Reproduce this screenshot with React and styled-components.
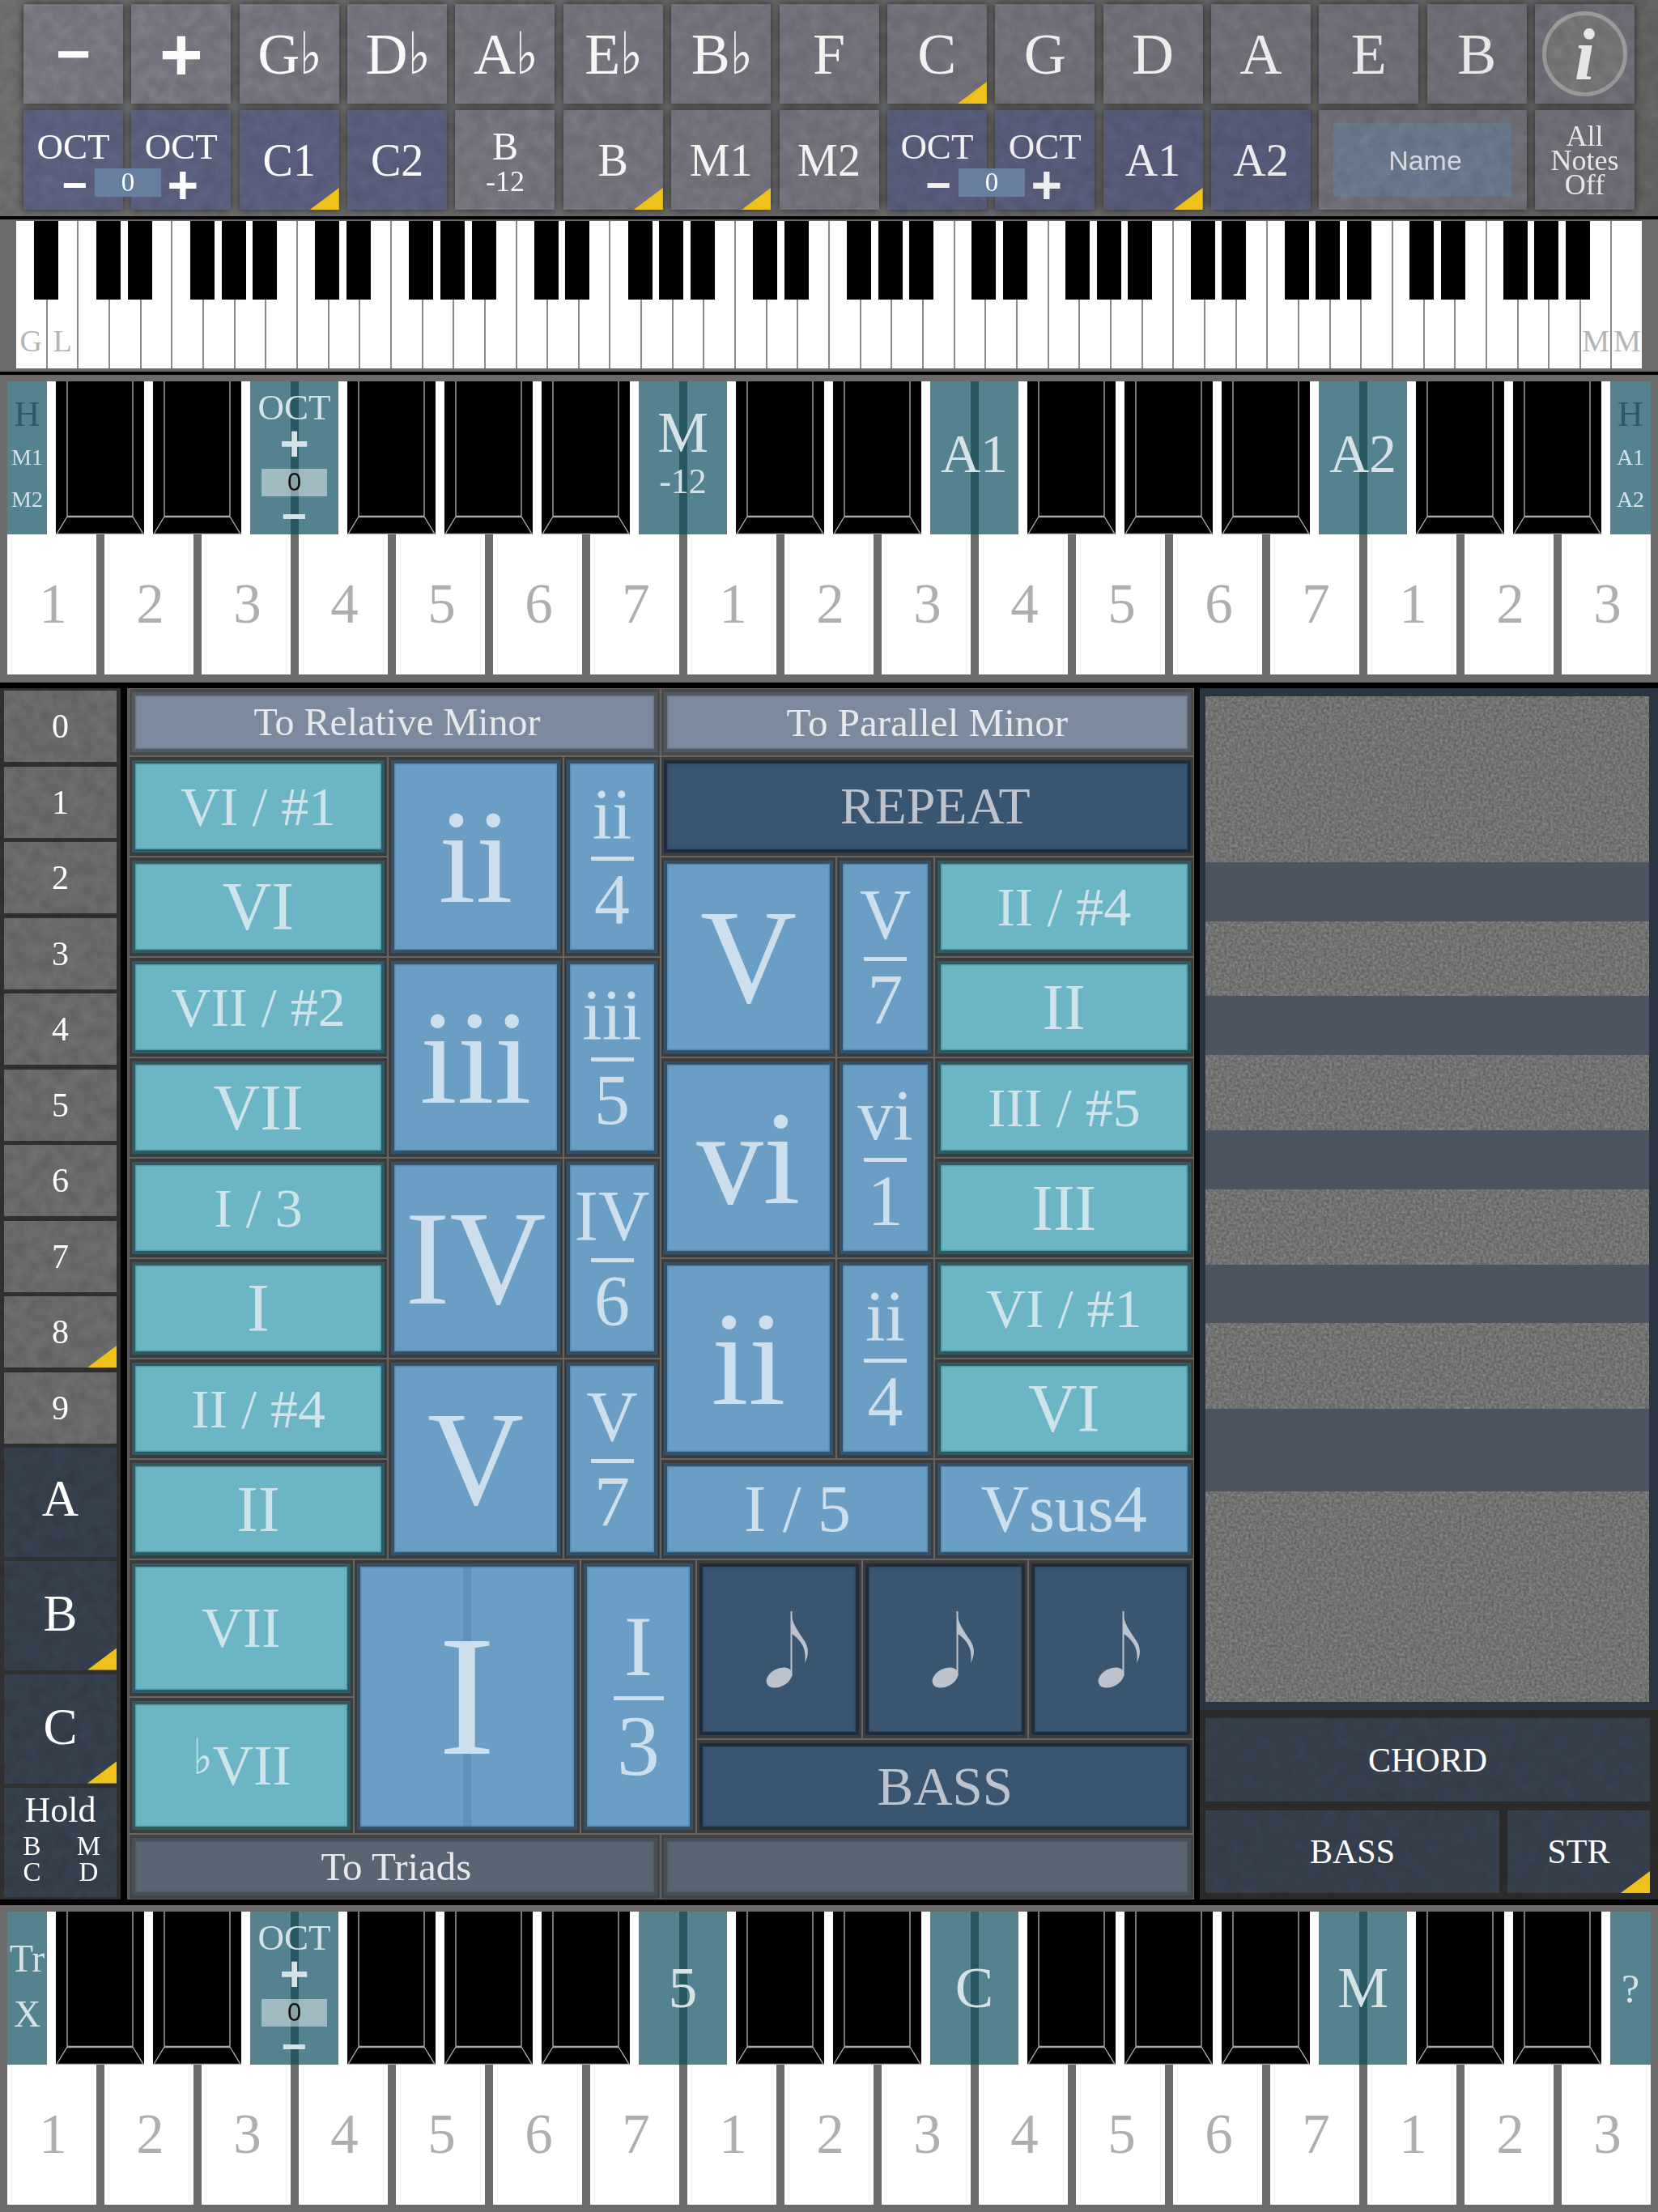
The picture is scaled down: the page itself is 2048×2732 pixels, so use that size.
import React from "react";
import styled, { createGlobalStyle } from "styled-components";

const SERIF = `"Liberation Serif", "Times New Roman", serif`;
const SANS = `"Liberation Sans", Arial, sans-serif`;

const GlobalStyle = createGlobalStyle`
  html, body {
    margin: 0;
    background: #000;
  }
  * {
    box-sizing: border-box;
  }
`;

const Page = styled.div`
  width: 2048px;
  height: 2732px;
  overflow: hidden;
  display: flex;
  flex-direction: column;
  font-family: ${SERIF};
  color: #fff;
`;

const GrainDefs = styled.svg`
  position: absolute;
  width: 0;
  height: 0;
`;

const Grain = styled.div`
  position: absolute;
  inset: 0;
  pointer-events: none;
  filter: url(#${(p) => p.$kind || "mottled"});
  opacity: ${(p) => p.$opacity || 0.25};
  mix-blend-mode: overlay;
`;

/* top bar */
const TopBar = styled.div`
  position: relative;
  height: 271px;
  padding: 5px 29px 0;
  background: #6c6c6c;
  border-bottom: 4px solid #000;
  display: grid;
  grid-template-columns: repeat(15, 123px);
  grid-auto-rows: 123px;
  column-gap: 10.36px;
  row-gap: 8px;
`;

const RightShade = styled.div`
  position: absolute;
  inset: 0;
  pointer-events: none;
  background: linear-gradient(90deg, rgba(0, 0, 0, 0) 0%, rgba(0, 0, 0, 0.1) 100%);
`;

const Pad = styled.div`
  position: relative;
  grid-column: span ${(p) => p.$span || 1};
  display: flex;
  flex-direction: column;
  align-items: center;
  justify-content: center;
  background: ${(p) => (p.$tone === "blue" ? "#5a5f7e" : "#777680")};
  box-shadow: 0 0 9px rgba(0, 0, 0, 0.6);
  font-size: ${(p) => p.$size || 72}px;
  line-height: 1;
`;

const Corner = styled.span`
  position: absolute;
  right: 0;
  bottom: 0;
  width: 36px;
  height: 27px;
  z-index: 3;
  background: #eec21a;
  clip-path: polygon(100% 0, 100% 100%, 0 100%);
`;

const Flat = styled.span`
  font-family: "DejaVu Sans", sans-serif;
  font-size: 1em;
  display: inline-block;
  margin: 0 -5px 0 -3px;
  transform: scaleX(0.82);
`;

const Sign = styled.span`
  font-family: ${SANS};
  font-weight: 700;
  font-size: ${(p) => p.$size}px;
  line-height: 1;
`;

const OctPad = styled(Pad)`
  justify-content: flex-start;
  padding-top: 22px;
`;

const OctCaption = styled.div`
  font-size: 45px;
  line-height: 46px;
  height: 46px;
`;

const OctSign = styled(Sign)`
  position: relative;
  left: 2px;
  margin-top: 4px;
  height: 40px;
  line-height: 40px;
`;

const OctValue = styled.div`
  position: absolute;
  left: 88px;
  top: 72px;
  width: 82px;
  height: 35px;
  z-index: 2;
  background: #667f9e;
  display: flex;
  align-items: center;
  justify-content: center;
  font-size: 33px;
`;

const StackedPad = styled(Pad)`
  padding-top: 6px;
`;

const StackedLabel = styled.div`
  font-size: 48px;
  line-height: 46px;
`;

const StackedSub = styled.div`
  font-size: 36px;
  line-height: 40px;
`;

const NameField = styled.div`
  width: 220px;
  height: 91px;
  background: #6f8296;
  display: flex;
  align-items: center;
  justify-content: center;
  font-family: ${SANS};
  font-size: 34px;
  color: #e8edf1;
  padding-left: 6px;
`;

const OffLabel = styled.div`
  font-size: 36px;
  line-height: 30px;
  text-align: center;
`;

const InfoCircle = styled.div`
  width: 105px;
  height: 105px;
  border-radius: 50%;
  background: #7f7f7f;
  border: 5px solid #a9a9a9;
  display: flex;
  align-items: center;
  justify-content: center;
  font-size: 92px;
  font-weight: 700;
  font-style: italic;
`;

/* 88 key strip */
const MiniSection = styled.div`
  position: relative;
  height: 192px;
  padding: 2px 20px 4px;
  background: #6b6b6b;
  border-bottom: 4px solid #000;
`;

const MiniKeys = styled.div`
  position: relative;
  height: 182px;
  display: flex;
`;

const MiniWhite = styled.div`
  flex: 1;
  background: #fff;
  border-left: 2px solid #8a8a8a;
  display: flex;
  align-items: flex-end;
  justify-content: center;
  padding-bottom: 15px;
  font-size: 38px;
  line-height: 1;
  color: #b5b5b5;
  &:first-child {
    border-left: 0;
  }
`;

const MiniBlack = styled.div`
  position: absolute;
  top: 0;
  width: 30px;
  height: 97px;
  background: #000;
`;

/* big keyboards */
const KeySection = styled.div`
  height: ${(p) => p.$height}px;
  padding-top: 8px;
  background: #6b6b6b;
`;

const SharpRow = styled.div`
  width: 2030px;
  height: 189px;
  margin-left: 9px;
  background: #fff;
  display: flex;
  gap: 11px;
`;

const NumberRow = styled.div`
  height: 173px;
  padding-left: 9px;
  display: flex;
  gap: 10px;
`;

const WhiteKey = styled.div`
  width: 110px;
  padding-left: 3px;
  background: #fff;
  display: flex;
  align-items: center;
  justify-content: center;
  font-size: 69px;
  line-height: 1;
  color: #aeaeae;
`;

const BlackKey = styled.svg`
  display: block;
  width: 109px;
  height: 189px;
  background: #000;
`;

const TealKey = styled.div`
  position: relative;
  width: 109px;
  height: 189px;
  background: #55828f;
  color: #d7e2e5;
  display: flex;
  flex-direction: column;
  align-items: center;
  justify-content: ${(p) => (p.$stack ? "flex-start" : "center")};
  padding-bottom: ${(p) => p.$lift || 0}px;
  &::before {
    content: "";
    position: absolute;
    top: 0;
    bottom: 0;
    left: 50%;
    width: 10px;
    margin-left: -5px;
    background: #27585f;
  }
  & > * {
    position: relative;
  }
`;

const TealText = styled.div`
  position: relative;
  font-size: ${(p) => p.$size}px;
  line-height: 1;
  margin-top: ${(p) => p.$gap || 0}px;
`;

const TealOct = styled.div`
  position: relative;
  margin-top: 8px;
  height: 48px;
  font-size: 45px;
  line-height: 48px;
`;

const TealSign = styled.div`
  position: relative;
  margin-top: ${(p) => p.$gap}px;
  height: 32px;
  line-height: 32px;
  font-family: ${SANS};
  font-weight: 700;
  font-size: ${(p) => p.$size}px;
`;

const TealValue = styled.div`
  position: relative;
  margin-top: 15px;
  width: 81px;
  height: 34px;
  background: rgba(255, 255, 255, 0.45);
  display: flex;
  align-items: center;
  justify-content: center;
  font-family: ${SANS};
  font-size: 31px;
  color: #111;
`;

const HalfKey = styled.div`
  width: ${(p) => p.$width}px;
  height: 189px;
  background: #55828f;
  color: #d7e2e5;
  display: flex;
  flex-direction: column;
  align-items: center;
  padding-top: ${(p) => p.$top || 0}px;
  justify-content: ${(p) => (p.$center ? "center" : "flex-start")};
`;

const HalfLine = styled.div`
  height: ${(p) => p.$height || 50}px;
  line-height: ${(p) => p.$height || 50}px;
  font-size: ${(p) => p.$size}px;
  margin-top: ${(p) => p.$gap || 0}px;
  color: ${(p) => p.$color || "inherit"};
`;

/* middle */
const Middle = styled.div`
  height: 1510px;
  padding-top: 7px;
  background: #000;
  display: flex;
  align-items: flex-start;
`;

const SideColumn = styled.div`
  position: relative;
  width: 149px;
  height: 1496px;
  padding: 3px 5px 0;
  background: #2f2f2f;
  display: flex;
  flex-direction: column;
  gap: 5.5px;
`;

const SideButton = styled.div`
  position: relative;
  height: ${(p) => p.$height}px;
  flex: none;
  padding-bottom: ${(p) => p.$lift || 0}px;
  background: ${(p) => p.$fill};
  display: flex;
  align-items: center;
  justify-content: center;
  font-size: ${(p) => p.$size}px;
  line-height: 1;
`;

const HoldButton = styled(SideButton)`
  flex-direction: column;
  justify-content: flex-start;
  padding-top: 6px;
`;

const HoldTitle = styled.div`
  font-size: 44px;
  line-height: 44px;
`;

const HoldGrid = styled.div`
  display: grid;
  grid-template-columns: 70px 70px;
  justify-items: center;
  font-size: 33px;
  line-height: 32px;
  margin-top: 6px;
`;

const Board = styled.div`
  width: 1317.5px;
  height: 1496px;
  margin-left: 8px;
  padding-left: 2px;
  background: #5a5a5a;
`;

const HeaderRow = styled.div`
  height: ${(p) => p.$height}px;
  display: grid;
  grid-template-columns: 657px 658.5px;
`;

const BodyGrid = styled.div`
  display: grid;
  grid-template-columns: 320px 217px 120px 217px 121px 320.5px;
  grid-template-rows: repeat(8, 124px);
`;

const FootGrid = styled.div`
  display: grid;
  grid-template-columns: 277.5px 280.5px 143px repeat(3, 204.83px);
  grid-template-rows: 170px 52px 117px;
`;

const TONES = {
  teal: { fill: "#6bb5c5", edge: "#2f5a62", rim: "#549dad", text: "#cde4ea", slot: "#3c3c3c" },
  blue: { fill: "#6b9ec4", edge: "#32526b", rim: "#5a8cb2", text: "#cddfec", slot: "#3c3c3c" },
  navy: { fill: "#3a556f", edge: "#1e2c3b", rim: "#324a62", text: "#bcc3cc", slot: "#3c3c3c" },
  head: { fill: "#7b8a9c", edge: "#505862", rim: "#6a7888", text: "#e6e9ec", slot: "#4a4a4a" },
  foot: { fill: "#5a6573", edge: "#484e56", rim: "#525c69", text: "#e6e9ec", slot: "#444444" },
};

const Slot = styled.div`
  grid-column: ${(p) => p.$col || "auto"};
  grid-row: ${(p) => p.$row || "auto"};
  padding: 5px 4px;
  background: ${(p) => TONES[p.$tone].slot};
  box-shadow: inset 0 0 0 1px #666;
  display: flex;
  min-width: 0;
`;

const Face = styled.div`
  position: relative;
  flex: 1;
  min-width: 0;
  padding-left: ${(p) => p.$nudge || 0}px;
  background: ${(p) => TONES[p.$tone].fill};
  border: 4px solid ${(p) => TONES[p.$tone].edge};
  box-shadow: inset 0 0 0 1.5px ${(p) => TONES[p.$tone].rim};
  color: ${(p) => TONES[p.$tone].text};
  display: flex;
  flex-direction: column;
  align-items: center;
  justify-content: center;
  font-size: ${(p) => p.$size}px;
  line-height: 1;
  white-space: nowrap;
`;

const FaceStrip = styled.div`
  position: absolute;
  top: 0;
  bottom: 0;
  left: 50%;
  width: 10px;
  margin-left: -5px;
  background: rgba(50, 90, 130, 0.18);
`;

const FaceLabel = styled.span`
  position: relative;
`;

const FractionBar = styled.div`
  width: ${(p) => p.$width}px;
  height: 5px;
  margin: 8px 0 4px;
  background: currentColor;
`;

const SmallFlat = styled.span`
  font-family: "DejaVu Sans", sans-serif;
  font-size: 0.87em;
  position: relative;
  top: -0.2em;
  display: inline-block;
  margin-right: -2px;
  transform: scaleX(0.85);
`;

const NoteIcon = styled.svg`
  width: 54px;
  height: 95px;
  margin-left: 22px;
  fill: #bcc3cc;
`;

/* right side */
const RightColumn = styled.div`
  width: 566px;
  margin-left: 7.5px;
  display: flex;
  flex-direction: column;
`;

const StripeFrame = styled.div`
  height: 1262px;
  padding: 10px 11px 11px 7px;
  background: #2a3442;
  display: flex;
  flex-direction: column;
`;

const Stripe = styled.div`
  position: relative;
  height: ${(p) => p.$height}px;
  flex: none;
  background: ${(p) => (p.$dark ? "#4b5460" : "#727272")};
`;

const Transport = styled.div`
  position: relative;
  height: 234px;
  padding: 10px 10px 8px 7px;
  background: #2a2a2a;
  display: grid;
  grid-template-columns: 363px 176px;
  grid-template-rows: 103px 102px;
  gap: 11px 10px;
`;

const TransportButton = styled.div`
  position: relative;
  grid-column: ${(p) => p.$col || "auto"};
  background: #353e4b;
  display: flex;
  align-items: center;
  justify-content: center;
  font-size: 42px;
  line-height: 1;
`;

const NATURALS = [
  ["F"],
  ["C", true],
  ["G"],
  ["D"],
  ["A"],
  ["E"],
  ["B"],
];

const miniBlackBoundaries = () => {
  const out = [1];
  for (let octave = 0; octave < 7; octave++) {
    const c = 2 + octave * 7;
    [1, 2, 4, 5, 6].forEach((d) => out.push(c + d));
  }
  return out;
};

const STRIPES = [
  [205, false],
  [73, true],
  [91.5, false],
  [73, true],
  [93, false],
  [73, true],
  [93, false],
  [72, true],
  [106, false],
  [102, true],
  [260, false],
];

const MINI_WIDTH = 2008 / 52;
const MINI_LABELS = { 0: "G", 1: "L", 50: "M", 51: "M" };
const DIGITS = [1, 2, 3, 4, 5, 6, 7, 1, 2, 3, 4, 5, 6, 7, 1, 2, 3];

const SharpBevel = () => (
  <BlackKey viewBox="0 0 109 189">
    <g fill="none" stroke="#aaa" strokeWidth="1.4">
      <path d="M14 0V166.500M95 0V166.500" />
      <path d="M14 167H95" strokeWidth="2.5" />
      <path d="M14 167L1 188.500H108L95 167" />
    </g>
  </BlackKey>
);

const OctaveKey = () => (
  <TealKey $stack>
    <TealOct>OCT</TealOct>
    <TealSign $gap={5} $size={62}>+</TealSign>
    <TealValue>0</TealValue>
    <TealSign $gap={8} $size={54}>−</TealSign>
  </TealKey>
);

const Keyboard = ({ height, first, last, specials }) => (
  <KeySection $height={height}>
    <SharpRow>
      {first}
      {Array.from({ length: 16 }, (_, i) => (
        <React.Fragment key={i}>{specials[i] || <SharpBevel />}</React.Fragment>
      ))}
      {last}
    </SharpRow>
    <NumberRow>
      {DIGITS.map((d, i) => (
        <WhiteKey key={i}>{d}</WhiteKey>
      ))}
    </NumberRow>
  </KeySection>
);

const OctavePair = () => (
  <>
    <OctPad $tone="blue">
      <OctCaption>OCT</OctCaption>
      <OctSign $size={54}>−</OctSign>
      <OctValue>0</OctValue>
    </OctPad>
    <OctPad $tone="blue">
      <OctCaption>OCT</OctCaption>
      <OctSign $size={66}>+</OctSign>
    </OctPad>
  </>
);

const Roman = ({ tone, col, row, size, nudge, children, strip }) => (
  <Slot $tone={tone} $col={col} $row={row}>
    <Face $tone={tone} $size={size} $nudge={nudge}>
      {strip && <FaceStrip />}
      <FaceLabel>{children}</FaceLabel>
    </Face>
  </Slot>
);

const Fraction = ({ col, row, size = 88, barWidth = 53, top, bottom }) => (
  <Slot $tone="blue" $col={col} $row={row}>
    <Face $tone="blue" $size={size}>
      <div>{top}</div>
      <FractionBar $width={barWidth} />
      <div>{bottom}</div>
    </Face>
  </Slot>
);

const Note = ({ col, row }) => (
  <Slot $tone="navy" $col={col} $row={row}>
    <Face $tone="navy" $size={60}>
      <NoteIcon viewBox="0 0 54 95">
        <ellipse cx="16.500" cy="82" rx="17" ry="11" transform="rotate(-28 16.500 82)" />
        <path d="M30.500 0H32.500V80H30.500Z" />
        <path d="M31 0C32 14 38 22 46 34C53 44 54 52 48 64C50 50 47 38 32 28Z" />
      </NoteIcon>
    </Face>
  </Slot>
);

export default function App() {
  return (
    <Page>
      <GlobalStyle />
      <GrainDefs aria-hidden="true">
        <defs>
          <filter id="mottled" x="0" y="0" width="100%" height="100%" colorInterpolationFilters="sRGB">
            <feTurbulence type="fractalNoise" baseFrequency="0.06" numOctaves="4" seed="7" />
            <feColorMatrix values="1.4 0 0 0 -0.2  1.4 0 0 0 -0.2  1.4 0 0 0 -0.2  0 0 0 0 1" />
          </filter>
          <filter id="fine" x="0" y="0" width="100%" height="100%" colorInterpolationFilters="sRGB">
            <feTurbulence type="fractalNoise" baseFrequency="0.3" numOctaves="2" seed="3" />
            <feColorMatrix values="1.6 0 0 0 -0.3  1.6 0 0 0 -0.3  1.6 0 0 0 -0.3  0 0 0 0 1" />
          </filter>
        </defs>
      </GrainDefs>

      <TopBar>
        <Pad><Sign $size={74}>−</Sign></Pad>
        <Pad><Sign $size={92}>+</Sign></Pad>
        {["G", "D", "A", "E", "B"].map((n) => (
          <Pad key={n}>
            <span>{n}<Flat>♭</Flat></span>
          </Pad>
        ))}
        {NATURALS.map(([n, corner]) => (
          <Pad key={n}>
            {n}
            {corner && <Corner />}
          </Pad>
        ))}
        <Pad><InfoCircle>i</InfoCircle></Pad>

        <OctavePair />
        <Pad $tone="blue" $size={56}>C1<Corner /></Pad>
        <Pad $tone="blue" $size={56}>C2</Pad>
        <StackedPad>
          <StackedLabel>B</StackedLabel>
          <StackedSub>-12</StackedSub>
        </StackedPad>
        <Pad $size={56}>B<Corner /></Pad>
        <Pad $size={56}>M1<Corner /></Pad>
        <Pad $size={56}>M2</Pad>
        <OctavePair />
        <Pad $tone="blue" $size={56}>A1<Corner /></Pad>
        <Pad $tone="blue" $size={56}>A2</Pad>
        <Pad $span={2}><NameField>Name</NameField></Pad>
        <Pad><OffLabel>All<br />Notes<br />Off</OffLabel></Pad>

        <Grain $opacity={0.07} />
        <RightShade />
      </TopBar>

      <MiniSection>
        <MiniKeys>
          {Array.from({ length: 52 }, (_, i) => (
            <MiniWhite key={i}>{MINI_LABELS[i]}</MiniWhite>
          ))}
          {miniBlackBoundaries().map((b) => (
            <MiniBlack key={b} style={{ left: b * MINI_WIDTH - 16.7 }} />
          ))}
        </MiniKeys>
      </MiniSection>

      <Keyboard
        height={380}
        first={
          <HalfKey $width={49} $top={16}>
            <HalfLine $size={44} $color="#2f5a62">H</HalfLine>
            <HalfLine $size={28} $height={55}>M1</HalfLine>
            <HalfLine $size={28}>M2</HalfLine>
          </HalfKey>
        }
        last={
          <HalfKey $width={50} $top={16}>
            <HalfLine $size={44} $color="#2f5a62">H</HalfLine>
            <HalfLine $size={28} $height={55}>A1</HalfLine>
            <HalfLine $size={28}>A2</HalfLine>
          </HalfKey>
        }
        specials={{
          2: <OctaveKey />,
          6: (
            <TealKey $lift={15}>
              <TealText $size={71}>M</TealText>
              <TealText $size={44} $gap={3}>-12</TealText>
            </TealKey>
          ),
          9: <TealKey $lift={12}><TealText $size={68}>A1</TealText></TealKey>,
          13: <TealKey $lift={12}><TealText $size={68}>A2</TealText></TealKey>,
        }}
      />

      <Middle>
        <SideColumn>
          {[0, 1, 2, 3, 4, 5, 6, 7, 8, 9].map((n) => (
            <SideButton key={n} $height={88} $fill="#686868" $size={42}>
              {n}
              {n === 8 && <Corner />}
            </SideButton>
          ))}
          <SideButton $height={134.5} $fill="#353e4b" $size={63} $lift={8}>A</SideButton>
          <SideButton $height={134.5} $fill="#353e4b" $size={63} $lift={3}>B<Corner /></SideButton>
          <SideButton $height={134.5} $fill="#353e4b" $size={63} $lift={3}>C<Corner /></SideButton>
          <HoldButton $height={134.5} $fill="#353e4b" $size={44}>
            <HoldTitle>Hold</HoldTitle>
            <HoldGrid>
              <span>B</span><span>M</span><span>C</span><span>D</span>
            </HoldGrid>
          </HoldButton>
          <Grain $opacity={0.08} />
        </SideColumn>

        <Board>
          <HeaderRow $height={84}>
            <Roman tone="head" size={48} nudge={6}>To Relative Minor</Roman>
            <Roman tone="head" size={49}>To Parallel Minor</Roman>
          </HeaderRow>

          <BodyGrid>
            <Roman tone="teal" col="1" row="1" size={68}>VI / #1</Roman>
            <Roman tone="teal" col="1" row="2" size={84}>VI</Roman>
            <Roman tone="teal" col="1" row="3" size={68}>VII / #2</Roman>
            <Roman tone="teal" col="1" row="4" size={80}>VII</Roman>
            <Roman tone="teal" col="1" row="5" size={68}>I / 3</Roman>
            <Roman tone="teal" col="1" row="6" size={84}>I</Roman>
            <Roman tone="teal" col="1" row="7" size={68}>II / #4</Roman>
            <Roman tone="teal" col="1" row="8" size={80}>II</Roman>

            <Roman tone="blue" col="2" row="1 / span 2" size={165}>ii</Roman>
            <Roman tone="blue" col="2" row="3 / span 2" size={165}>iii</Roman>
            <Roman tone="blue" col="2" row="5 / span 2" size={165}>IV</Roman>
            <Roman tone="blue" col="2" row="7 / span 2" size={165}>V</Roman>

            <Fraction col="3" row="1 / span 2" top="ii" bottom="4" />
            <Fraction col="3" row="3 / span 2" top="iii" bottom="5" />
            <Fraction col="3" row="5 / span 2" top="IV" bottom="6" />
            <Fraction col="3" row="7 / span 2" top="V" bottom="7" />

            <Roman tone="navy" col="4 / span 3" row="1" size={64} nudge={20}>REPEAT</Roman>

            <Roman tone="blue" col="4" row="2 / span 2" size={165}>V</Roman>
            <Roman tone="blue" col="4" row="4 / span 2" size={165}>vi</Roman>
            <Roman tone="blue" col="4" row="6 / span 2" size={165}>ii</Roman>

            <Fraction col="5" row="2 / span 2" top="V" bottom="7" />
            <Fraction col="5" row="4 / span 2" top="vi" bottom="1" />
            <Fraction col="5" row="6 / span 2" top="ii" bottom="4" />

            <Roman tone="teal" col="6" row="2" size={68}>II / #4</Roman>
            <Roman tone="teal" col="6" row="3" size={80}>II</Roman>
            <Roman tone="teal" col="6" row="4" size={68}>III / #5</Roman>
            <Roman tone="teal" col="6" row="5" size={80}>III</Roman>
            <Roman tone="teal" col="6" row="6" size={68}>VI / #1</Roman>
            <Roman tone="teal" col="6" row="7" size={84}>VI</Roman>

            <Roman tone="blue" col="4 / span 2" row="8" size={82}>I / 5</Roman>
            <Roman tone="blue" col="6" row="8" size={82}>Vsus4</Roman>
          </BodyGrid>

          <FootGrid>
            <Roman tone="teal" col="1" row="1" size={70}>VII</Roman>
            <Roman tone="teal" col="1" row="2 / span 2" size={70}><SmallFlat>♭</SmallFlat>VII</Roman>
            <Roman tone="blue" col="2" row="1 / span 3" size={211} strip>I</Roman>
            <Fraction col="3" row="1 / span 3" size={106} barWidth={62} top="I" bottom="3" />
            <Note col="4" row="1 / span 2" />
            <Note col="5" row="1 / span 2" />
            <Note col="6" row="1 / span 2" />
            <Roman tone="navy" col="4 / span 3" row="3" size={67}>BASS</Roman>
          </FootGrid>

          <HeaderRow $height={81}>
            <Roman tone="foot" size={49} nudge={4}>To Triads</Roman>
            <Roman tone="foot" size={49}>{"\u00a0"}</Roman>
          </HeaderRow>
        </Board>

        <RightColumn>
          <StripeFrame>
            {STRIPES.map(([h, dark], i) => (
              <Stripe key={i} $height={h} $dark={dark}>
                {!dark && <Grain $kind="fine" $opacity={0.18} />}
              </Stripe>
            ))}
          </StripeFrame>
          <Transport>
            <TransportButton $col="1 / span 2">CHORD</TransportButton>
            <TransportButton>BASS</TransportButton>
            <TransportButton>STR<Corner /></TransportButton>
            <Grain $opacity={0.06} />
          </Transport>
        </RightColumn>
      </Middle>

      <Keyboard
        height={379}
        first={
          <HalfKey $width={49} $top={33}>
            <HalfLine $size={48}>Tr</HalfLine>
            <HalfLine $size={46} $gap={19}>X</HalfLine>
          </HalfKey>
        }
        last={
          <HalfKey $width={50} $center>
            <HalfLine $size={50}>?</HalfLine>
          </HalfKey>
        }
        specials={{
          2: <OctaveKey />,
          6: <TealKey><TealText $size={71}>5</TealText></TealKey>,
          9: <TealKey><TealText $size={71}>C</TealText></TealKey>,
          13: <TealKey><TealText $size={71}>M</TealText></TealKey>,
        }}
      />
    </Page>
  );
}
